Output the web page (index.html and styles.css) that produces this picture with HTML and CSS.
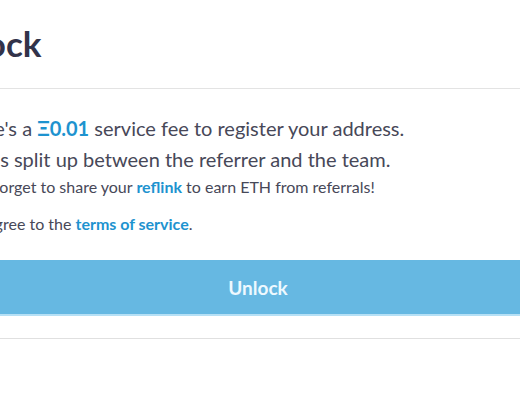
FILE: index.html
```html
<!DOCTYPE html>
<html>
<head>
<meta charset="utf-8">
<link rel="stylesheet" href="styles.css">
</head>
<body>
<div class="modal">
  <header class="modal-head">
    <h1 class="title">Unlock</h1>
  </header>
  <section class="modal-body">
    <p class="lead">There's a <a class="link strong" href="#">Ξ0.01</a> service fee to register your address.</p>
    <p class="lead">This is split up between the referrer and the team.</p>
    <p class="note">Don't forget to share your <a class="link" href="#">reflink</a> to earn ETH from referrals!</p>
    <label class="agree"><input type="checkbox" class="check"> I agree to the <a class="link" href="#">terms of service</a>.</label>
    <button class="unlock">Unlock</button>
  </section>
  <div class="modal-foot"></div>
</div>
</body>
</html>
```
FILE: styles.css
```css
html, body {
  margin: 0;
  padding: 0;
  background: #fff;
  overflow: hidden;
}
body {
  font-family: "Lato", "Open Sans", sans-serif;
  color: #474858;
}
.modal {
  margin-left: -46px;
  width: 640px;
}
.modal-head {
  height: 88px;
  border-bottom: 1px solid #e3e3e3;
  display: flex;
  align-items: center;
}
.title {
  margin: -2px 0 0 -22px;
  font-size: 35px;
  font-weight: 700;
  color: #32334a;
  line-height: 1;
}
.modal-body {
  padding-top: 24px;
  display: flex;
  flex-direction: column;
  align-items: flex-start;
}
.lead {
  margin: 0;
  font-size: 20px;
  line-height: 31px;
}
.note {
  margin: 0 0 0 -3px;
  font-size: 16px;
  line-height: 24px;
}
.agree {
  margin-top: 13px;
  font-size: 16px;
  line-height: 24px;
  display: flex;
  align-items: center;
  white-space: pre;
}
.check {
  margin: 0 6px 0 0;
  width: 14px;
  height: 14px;
}
.link {
  color: #1e93cf;
  text-decoration: none;
  font-weight: 700;
}
.unlock {
  margin-top: 24px;
  width: 608px;
  height: 56px;
  border: 0;
  border-bottom: 2px solid #b6e0f5;
  background: #66b8e2;
  color: #eef9ff;
  font-family: "Lato", "Open Sans", sans-serif;
  font-size: 19px;
  font-weight: 700;
  padding: 0;
}
.modal-foot {
  margin-top: 22px;
  border-top: 1px solid #e0e0e0;
}
```
